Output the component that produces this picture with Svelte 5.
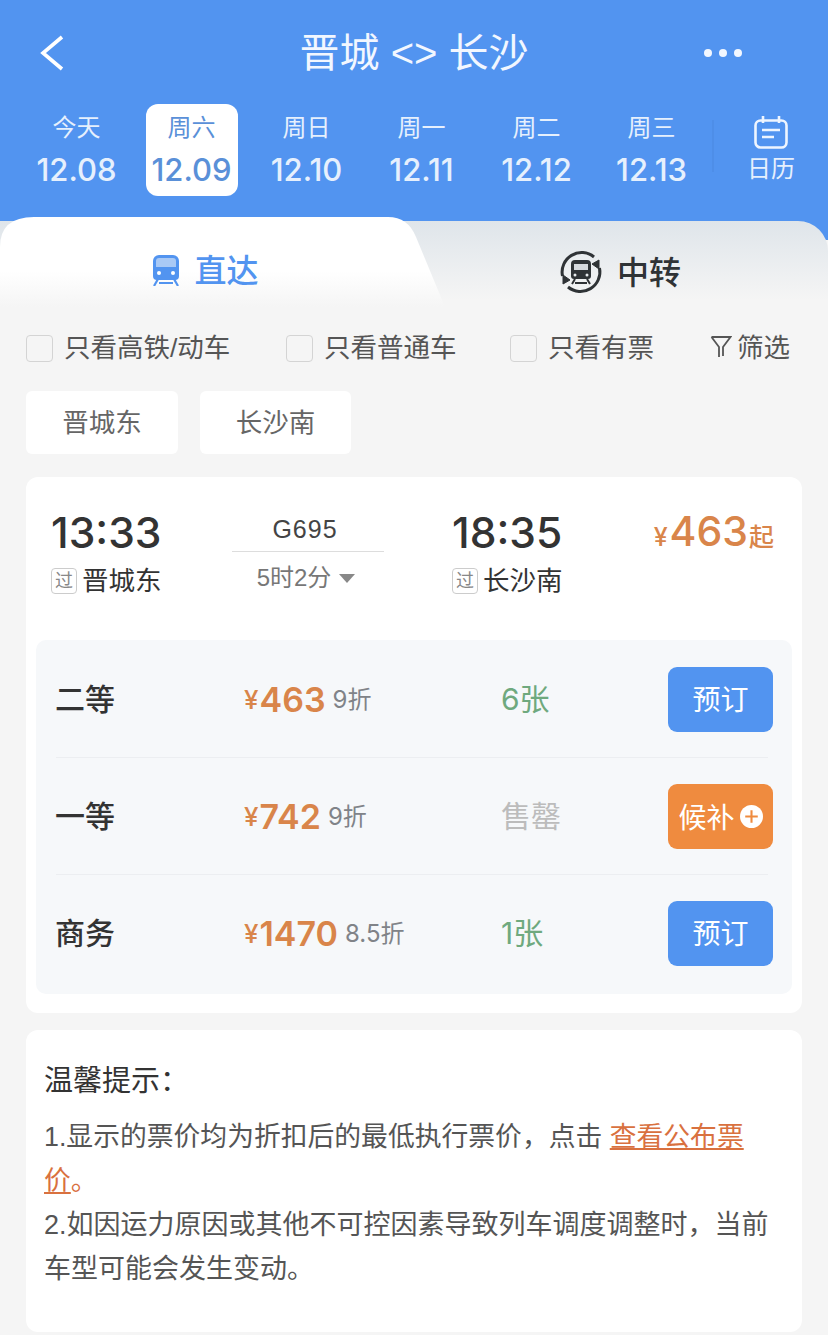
<script>
	const days = [
		{ week: '今天', date: '12.08' },
		{ week: '周六', date: '12.09', active: true },
		{ week: '周日', date: '12.10' },
		{ week: '周一', date: '12.11' },
		{ week: '周二', date: '12.12' },
		{ week: '周三', date: '12.13' }
	];

	const filters = [
		{ label: '只看高铁/动车', width: 260 },
		{ label: '只看普通车', width: 224 },
		{ label: '只看有票', width: 200 }
	];

	const seats = [
		{ name: '二等', price: '463', off: '9折', left: '6张', state: 'ok' },
		{ name: '一等', price: '742', off: '9折', left: '售罄', state: 'none' },
		{ name: '商务', price: '1470', off: '8.5折', left: '1张', state: 'ok' }
	];
</script>

<div class="page">
	<header class="head">
		<div class="nav">
			<svg class="back" width="26" height="36" viewBox="0 0 26 36">
				<path d="M23 2 L4 18 L23 34" fill="none" stroke="#fff" stroke-width="3.6" />
			</svg>
			<h1>晋城 &lt;&gt; 长沙</h1>
			<div class="dots"><i></i><i></i><i></i></div>
		</div>
		<div class="dates">
			{#each days as d}
				<div class="day" class:active={d.active}>
					<span class="week">{d.week}</span>
					<span class="date">{d.date}</span>
				</div>
			{/each}
			<div class="split"></div>
			<div class="cal">
				<svg width="34" height="33" viewBox="0 0 34 33" fill="none" stroke="#eef5ff" stroke-width="2.6">
					<rect x="1.5" y="4.5" width="31" height="27" rx="5" />
					<path d="M9 0v7M25 0v7M8 14h18M8 21h12" />
				</svg>
				<span>日历</span>
			</div>
		</div>
	</header>

	<div class="tabs">
		<div class="tab on">
			<svg class="tab-bg" width="450" height="90" viewBox="0 0 450 90" preserveAspectRatio="none">
				<defs>
					<linearGradient id="tabfill" x1="0" y1="0" x2="0" y2="1">
						<stop offset="0.6" stop-color="#fff" />
						<stop offset="1" stop-color="#f5f5f5" />
					</linearGradient>
				</defs>
				<path d="M0 90V30Q0 0 34 0H388Q408 0 416 20L445 90Z" fill="url(#tabfill)" />
			</svg>
			<svg class="tab-icon" width="28" height="31" viewBox="0 0 28 31">
				<path d="M7 0h14a6 6 0 0 1 6 6v15a4 4 0 0 1-4 4H5a4 4 0 0 1-4-4V6a6 6 0 0 1 6-6z" fill="#5294f0" />
				<path d="M7 3h14a3 3 0 0 1 3 3v6H4V6a3 3 0 0 1 3-3z" fill="#a9c9f5" />
				<circle cx="7" cy="18" r="2" fill="#fff" />
				<circle cx="21" cy="18" r="2" fill="#fff" />
				<path d="M6 24 2 31M22 24l4 7M7 28h14" stroke="#5294f0" stroke-width="2.2" fill="none" />
			</svg>
			<span>直达</span>
		</div>
		<div class="tab off">
			<svg class="tab-icon" width="44" height="44" viewBox="0 0 44 44" fill="none" stroke="#2f3336" stroke-width="3">
				<path d="M3.5 26A19.5 19.5 0 0 1 35 7" />
				<path d="M40.500 18A19.500 19.500 0 0 1 9 37" />
				<path d="M40 10v9l-7-5zM4 34v-9l7 5z" fill="#2f3336" stroke-width="1" />
				<path d="M16 10h12a4 4 0 0 1 4 4v12a3 3 0 0 1-3 3H15a3 3 0 0 1-3-3V14a4 4 0 0 1 4-4z" fill="#2f3336" stroke="none" />
				<rect x="15" y="14" width="14" height="6" fill="#d5d9dd" stroke="none" />
				<circle cx="16" cy="25" r="1.500" fill="#e8ebee" stroke="none" />
				<circle cx="28" cy="25" r="1.500" fill="#e8ebee" stroke="none" />
				<path d="M16 29l-3 5M28 29l3 5M16 33h12" stroke-width="2" />
			</svg>
			<span>中转</span>
		</div>
	</div>

	<div class="filters">
		{#each filters as f}
			<label class="check" style="width:{f.width}px">
				<i class="box"></i>
				<span>{f.label}</span>
			</label>
		{/each}
		<div class="funnel">
			<svg width="22" height="24" viewBox="0 0 22 24" fill="none" stroke="#555" stroke-width="1.8">
				<path d="M1.500 2h19L13 12v9M9 22V12L1.500 2" />
			</svg>
			<span>筛选</span>
		</div>
	</div>

	<div class="stations">
		<span class="chip">晋城东</span>
		<span class="chip">长沙南</span>
	</div>

	<section class="card">
		<div class="trip">
			<div class="stop">
				<div class="time">13:33</div>
				<div class="place"><i class="tag">过</i>晋城东</div>
			</div>
			<div class="train">
				<div class="no">G695</div>
				<div class="rule"></div>
				<div class="dur">5时2分<i class="caret"></i></div>
			</div>
			<div class="stop">
				<div class="time">18:35</div>
				<div class="place"><i class="tag">过</i>长沙南</div>
			</div>
			<div class="from"><small>¥</small>463<b>起</b></div>
		</div>

		<div class="seats">
			{#each seats as s}
				<div class="seat">
					<div class="name">{s.name}</div>
					<div class="price">
						<small>¥</small><span>{s.price}</span><em>{s.off}</em>
					</div>
					<div class="left" class:none={s.state === 'none'}>{s.left}</div>
					{#if s.state === 'ok'}
						<button class="btn">预订</button>
					{:else}
						<button class="btn wait">
							候补
							<svg width="23" height="23" viewBox="0 0 22 22">
								<circle cx="11" cy="11" r="11" fill="#fff" />
								<path d="M11 5v12M5 11h12" stroke="#ef8b3f" stroke-width="2" />
							</svg>
						</button>
					{/if}
				</div>
			{/each}
		</div>
	</section>

	<section class="tips">
		<h2>温馨提示：</h2>
		<p>1.显示的票价均为折扣后的最低执行票价，点击 <u>查看公布票</u></p>
		<p><u>价</u><span class="link">。</span></p>
		<p class="wide">2.如因运力原因或其他不可控因素导致列车调度调整时，当前</p>
		<p class="wide">车型可能会发生变动。</p>
	</section>
</div>

<style>
	:global(body) {
		margin: 0;
		background: #f5f5f5;
	}

	.page {
		width: 828px;
		height: 1335px;
		overflow: hidden;
		font-family: 'Liberation Sans', 'Noto Sans CJK SC', sans-serif;
		color: #333;
	}

	.head {
		height: 240px;
		background: #5294f0;
		color: #fff;
		box-sizing: border-box;
		padding-top: 28px;
	}

	.nav {
		display: grid;
		grid-template-columns: 1fr auto 1fr;
		align-items: center;
		height: 50px;
		padding: 0 86px 0 39px;
	}

	.nav h1 {
		margin: 0 0 0 47px;
		font-size: 40px;
		font-weight: 400;
		line-height: 50px;
		color: #f2f7ff;
		white-space: nowrap;
	}

	.dots {
		display: flex;
		gap: 7px;
		justify-self: end;
	}

	.dots i {
		width: 8px;
		height: 8px;
		border-radius: 50%;
		background: #f2f7ff;
	}

	.dates {
		display: flex;
		align-items: flex-start;
		margin-top: 26px;
		padding-left: 19px;
	}

	.day {
		flex: 0 0 115px;
		height: 92px;
		box-sizing: border-box;
		display: flex;
		flex-direction: column;
		align-items: center;
		padding-top: 7px;
		color: #e6f0fd;
	}

	.day.active {
		flex: 0 0 92px;
		margin: 0 11.5px;
		background: #fff;
		border-radius: 12px;
		color: #5a90d8;
	}

	.week {
		font-size: 24px;
		line-height: 34px;
	}

	.date {
		font-family: Inter, 'Liberation Sans', sans-serif;
		font-size: 31px;
		font-weight: 500;
		line-height: 44px;
		margin-top: 3px;
	}

	.split {
		width: 2px;
		height: 52px;
		margin: 16px 0 0 3px;
		background: #4e8ee8;
	}

	.cal {
		display: flex;
		flex-direction: column;
		align-items: center;
		margin-left: 33px;
		padding-top: 12px;
		color: #e6f0fd;
		font-size: 24px;
		line-height: 30px;
		gap: 5px;
	}

	.tabs {
		display: flex;
		height: 99px;
		position: relative;
		background: linear-gradient(#dfe5ea, #f5f5f5 80%);
		margin-top: -19px;
		border-radius: 0 30px 0 0;
	}

	.tab {
		display: flex;
		align-items: center;
		justify-content: center;
		width: 414px;
		gap: 14px;
		font-size: 32px;
		font-weight: 500;
		height: 100px;
		box-sizing: border-box;
		position: relative;
	}

	.tab span {
		padding-bottom: 4px;
	}

	.tab.on {
		color: #5294f0;
		margin-top: -4px;
		padding: 6px 3px 0 0;
	}

	.tab-bg {
		position: absolute;
		left: 0;
		top: 0;
		height: 90px;
	}

	.tab.on .tab-icon,
	.tab.on span {
		position: relative;
	}

	.tab.off {
		color: #2f3336;
		padding: 2px 2px 0 0;
	}

	.filters {
		display: flex;
		align-items: center;
		height: 56px;
		padding-left: 26px;
		font-size: 26.5px;
		color: #555;
	}

	.check {
		display: flex;
		align-items: center;
		gap: 11px;
	}

	.check span,
	.funnel span {
		padding-bottom: 5px;
	}

	.box {
		width: 25px;
		height: 25px;
		border: 1.5px solid #d4d4d4;
		border-radius: 4px;
		background: #f5f5f5;
	}

	.funnel {
		display: flex;
		align-items: center;
		gap: 5px;
		font-size: 26.5px;
	}

	.funnel svg {
		margin-bottom: 2px;
	}

	.stations {
		display: flex;
		gap: 22px;
		margin: 15px 0 23px 26px;
	}

	.chip {
		width: 152px;
		height: 63px;
		box-sizing: border-box;
		padding-bottom: 4px;
		background: #fff;
		border-radius: 6px;
		display: flex;
		align-items: center;
		justify-content: center;
		font-size: 26.5px;
		color: #666;
	}

	.chip + .chip {
		width: 151px;
	}

	.card {
		width: 776px;
		height: 536px;
		margin-left: 26px;
		background: #fff;
		border-radius: 12px;
		box-sizing: border-box;
		padding: 0 10px;
	}

	.trip {
		display: flex;
		height: 163px;
		position: relative;
		padding: 31px 0 0 15px;
		box-sizing: border-box;
	}

	.stop {
		width: 181px;
	}

	.time {
		font-family: Inter, 'Liberation Sans', sans-serif;
		font-size: 42.5px;
		font-weight: 500;
		line-height: 50px;
		color: #333;
	}

	.place {
		display: flex;
		align-items: center;
		font-size: 26.5px;
		line-height: 40px;
		margin-top: 3px;
		gap: 5px;
	}

	.tag {
		width: 26px;
		height: 26px;
		box-sizing: border-box;
		border: 1px solid #ccc;
		border-radius: 4px;
		font-style: normal;
		font-size: 18px;
		line-height: 24px;
		text-align: center;
		color: #888;
	}

	.train {
		width: 152px;
		margin-right: 68px;
		text-align: center;
	}

	.no {
		font-size: 25px;
		letter-spacing: 1px;
		line-height: 30px;
		margin: 6px 6px 0 0;
		color: #444;
	}

	.rule {
		height: 1px;
		margin-top: 7px;
		background: #ddd;
	}

	.dur {
		margin: 9px 4px 0 0;
		font-size: 24px;
		line-height: 34px;
		color: #777;
	}

	.caret {
		display: inline-block;
		margin-left: 8px;
		vertical-align: 3px;
		border: 8px solid transparent;
		border-top: 9px solid #888;
		border-bottom: 0;
	}

	.from {
		position: absolute;
		right: 18px;
		top: 29px;
		color: #d9854a;
		font-family: Inter, 'Liberation Sans', 'Noto Sans CJK SC', sans-serif;
		font-size: 41px;
		font-weight: 500;
		line-height: 50px;
	}

	.from small {
		font-size: 25px;
		margin-right: 2px;
	}

	.from b {
		font-size: 25px;
		font-weight: 500;
		margin-left: 1px;
	}

	.seats {
		background: #f6f8fa;
		border-radius: 10px;
		height: 354px;
		padding: 1px 19px 0 20px;
		box-sizing: border-box;
	}

	.seat {
		display: flex;
		align-items: center;
		height: 117px;
		box-sizing: border-box;
		padding-bottom: 1px;
		position: relative;
	}

	.seat::after {
		content: '';
		position: absolute;
		left: 0;
		right: 5px;
		bottom: 0;
		height: 1px;
		background: #eceef1;
	}

	.seat:last-child::after {
		display: none;
	}

	.name {
		width: 189px;
		margin-left: -1px;
		padding-bottom: 5px;
		font-size: 30px;
		font-weight: 500;
		color: #333;
	}

	.price {
		width: 257px;
		display: flex;
		align-items: center;
		color: #d9854a;
		font-family: Inter, 'Liberation Sans', 'Noto Sans CJK SC', sans-serif;
		font-size: 34px;
		font-weight: 600;
	}

	.price small {
		font-size: 26px;
		font-weight: 500;
		margin-right: 1px;
	}

	.price em {
		font-style: normal;
		font-weight: 400;
		font-size: 24px;
		color: #808388;
		margin-left: 7px;
		padding-bottom: 3px;
	}

	.left {
		width: 167px;
		padding-bottom: 5px;
		font-family: Inter, 'Noto Sans CJK SC', sans-serif;
		font-size: 30px;
		color: #6fa97e;
	}

	.left.none {
		color: #bcbcbc;
	}

	.btn {
		width: 105px;
		height: 65px;
		border: 0;
		border-radius: 9px;
		background: #5294f0;
		color: #fff;
		font: inherit;
		font-size: 28px;
		display: flex;
		align-items: center;
		justify-content: center;
		padding: 0 0 3px;
	}

	.btn.wait {
		background: #ef8b3f;
		gap: 5px;
		font-size: 28px;
		padding: 0;
	}

	.tips {
		width: 776px;
		margin: 17px 0 0 26px;
		padding: 29px 32px 0 18px;
		height: 302px;
		box-sizing: border-box;
		background: #fff;
		border-radius: 12px;
	}

	.tips h2 {
		margin: 0 0 12px;
		font-size: 29px;
		font-weight: 400;
		line-height: 44px;
	}

	.tips p {
		margin: 0;
		font-size: 26.8px;
		line-height: 44px;
		color: #555;
		white-space: nowrap;
	}

	.tips p.wide {
		font-size: 27px;
	}

	.tips u,
	.link {
		color: #d9713f;
	}
</style>
